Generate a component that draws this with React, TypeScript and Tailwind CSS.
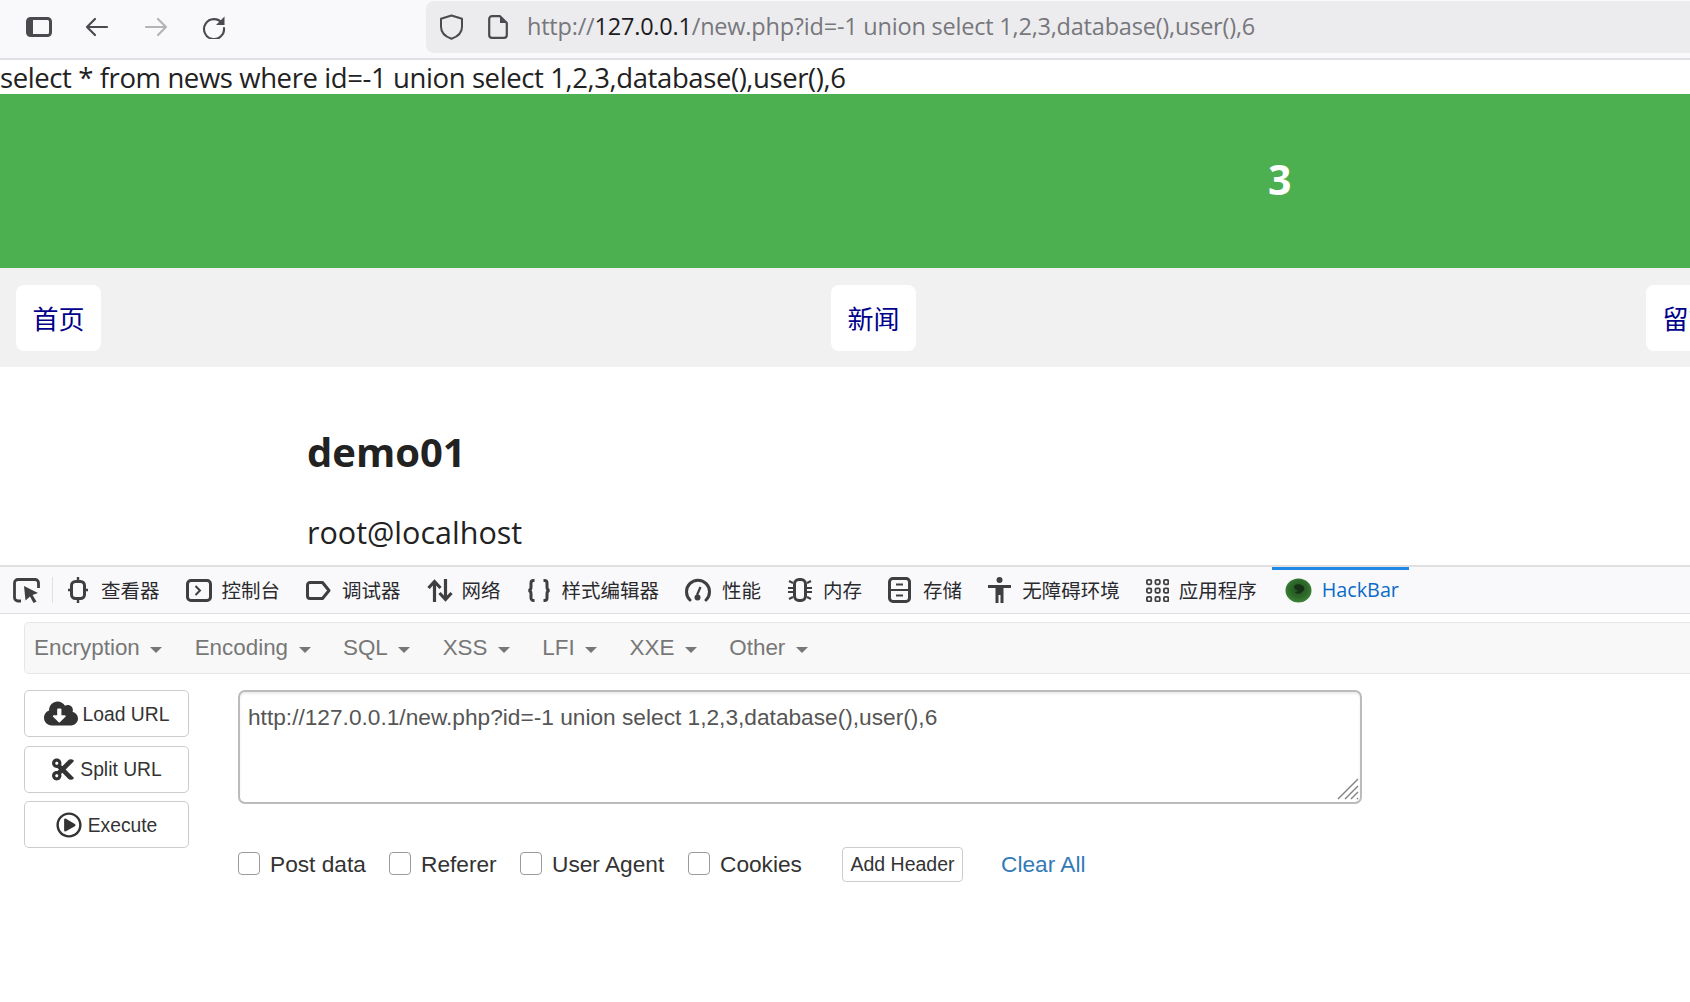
import { FaCloudDownloadAlt, FaCut, FaRegPlayCircle } from 'react-icons/fa';

const pageFont = "font-['Open_Sans','Noto_Sans_CJK_SC',sans-serif]";
const cjkFont = "font-['Noto_Sans_CJK_SC','Noto_Sans',sans-serif]";
const arial = "font-['Liberation_Sans',Arial,sans-serif]";

// ─── Browser toolbar icons ────────────────────────────────────────────────────

function SidebarIcon() {
  return (
    <svg width="26" height="20" viewBox="0 0 26 20" fill="none" className="shrink-0">
      <rect x="1.500" y="1.500" width="23" height="17" rx="3" stroke="#4a4a4f" strokeWidth="3" />
      <rect x="2" y="2" width="5" height="16" fill="#4a4a4f" />
    </svg>
  );
}

function ArrowIcon({ dir, color }: { dir: 'left' | 'right'; color: string }) {
  return (
    <svg width="24" height="20" viewBox="0 0 24 20" fill="none" stroke={color} strokeWidth="2.200" strokeLinecap="round" strokeLinejoin="round" className="shrink-0">
      {dir === 'left' ? <path d="M22 10H2M10 2l-8 8 8 8" /> : <path d="M2 10h20M14 2l8 8-8 8" />}
    </svg>
  );
}

function ReloadIcon() {
  return (
    <svg width="24" height="24" viewBox="0 0 24 24" fill="none" className="shrink-0">
      <path d="M20 8a10 10 0 1 0 2 5" stroke="#4a4a4f" strokeWidth="2.100" strokeLinecap="round" />
      <path d="M22.500 1.500v8.500H14z" fill="#4a4a4f" />
    </svg>
  );
}

function ShieldIcon() {
  return (
    <svg width="25" height="26" viewBox="0 0 25 26" fill="none" className="shrink-0">
      <path d="M12.500 1.500l10.500 3.200v8c0 6-4.500 10-10.500 12C6.500 22.700 2 18.700 2 12.700v-8z" stroke="#4a4a4f" strokeWidth="2" strokeLinejoin="round" />
    </svg>
  );
}

function DocIcon() {
  return (
    <svg width="20" height="24" viewBox="0 0 20 24" fill="none" className="shrink-0">
      <path d="M4 1.200h8l6.800 6.800v12a2.800 2.800 0 0 1-2.800 2.800H4A2.800 2.800 0 0 1 1.200 20V4A2.800 2.800 0 0 1 4 1.200z" stroke="#4a4a4f" strokeWidth="2.200" strokeLinejoin="round" />
      <path d="M12 1.500v6.500h6.500z" fill="#4a4a4f" />
    </svg>
  );
}

// ─── Devtools tab icons ───────────────────────────────────────────────────────

const ink = '#3f3f42';

function PickerIcon() {
  return (
    <svg width="27" height="25" viewBox="0 0 27 25" fill="none" className="shrink-0">
      <path d="M8 23H5a3.500 3.500 0 0 1-3.500-3.500V5A3.500 3.500 0 0 1 5 1.500h17A3.500 3.500 0 0 1 25.500 5v5" stroke={ink} strokeWidth="2.800" />
      <path d="M11 8l14 7-5.500 2 4 6.500-3 1.500-3.500-6.500-4.500 4z" fill={ink} />
    </svg>
  );
}

function InspectorIcon() {
  return (
    <svg width="20" height="26" viewBox="0 0 20 26" fill="none" className="shrink-0">
      <rect x="3.500" y="4.500" width="13" height="17" rx="4" stroke={ink} strokeWidth="3" />
      <path d="M10 0v4M10 22v4M0 13h3M17 13h3" stroke={ink} strokeWidth="2.400" />
    </svg>
  );
}

function ConsoleIcon() {
  return (
    <svg width="26" height="23" viewBox="0 0 26 23" fill="none" className="shrink-0">
      <rect x="1.500" y="1.500" width="23" height="20" rx="3.500" stroke={ink} strokeWidth="3" />
      <path d="M9.500 7l4.500 4.500L9.500 16" stroke={ink} strokeWidth="2" />
    </svg>
  );
}

function DebuggerIcon() {
  return (
    <svg width="25" height="19" viewBox="0 0 25 19" fill="none" className="shrink-0">
      <path d="M4 1.500h12.500l6.500 8-6.500 8H4A2.500 2.500 0 0 1 1.500 15V4A2.500 2.500 0 0 1 4 1.500z" stroke={ink} strokeWidth="3" strokeLinejoin="round" />
    </svg>
  );
}

function NetworkIcon() {
  return (
    <svg width="26" height="23" viewBox="0 0 26 23" fill="none" stroke={ink} strokeWidth="3.200" className="shrink-0">
      <path d="M7.500 23V3M1.500 9l6-6.500 6 6.500M18.500 0v20M12.500 14l6 6.500 6-6.500" />
    </svg>
  );
}

function BracesIcon() {
  return (
    <svg width="24" height="23" viewBox="0 0 24 23" fill="none" stroke={ink} strokeWidth="3" className="shrink-0">
      <path d="M7.500 1.500H6.500A2.500 2.500 0 0 0 4 4v4.300c0 2-1 3.200-2.700 3.200C3 11.500 4 12.700 4 14.700V19a2.500 2.500 0 0 0 2.500 2.500h1" />
      <path d="M16.500 1.500h1A2.500 2.500 0 0 1 20 4v4.300c0 2 1 3.200 2.700 3.200-1.700 0-2.700 1.200-2.700 3.200V19a2.500 2.500 0 0 1-2.500 2.500h-1" />
    </svg>
  );
}

function PerformanceIcon() {
  return (
    <svg width="26" height="24" viewBox="0 0 26 24" fill="none" className="shrink-0">
      <path d="M5 22A11.500 11.500 0 1 1 21 22" stroke={ink} strokeWidth="3" strokeLinecap="round" />
      <path d="M15.500 9L12 17" stroke={ink} strokeWidth="2.200" />
      <circle cx="12.500" cy="19.500" r="3" fill={ink} />
    </svg>
  );
}

function MemoryIcon() {
  return (
    <svg width="26" height="24" viewBox="0 0 26 24" fill="none" className="shrink-0">
      <rect x="7.500" y="1.500" width="11" height="21" rx="4.500" stroke={ink} strokeWidth="3" />
      <path d="M6 5L2 3M6 10H1M6 14H1M6 19l-4 2M20 5l4-2M20 10h5M20 14h5M20 19l4 2" stroke={ink} strokeWidth="2" />
    </svg>
  );
}

function StorageIcon() {
  return (
    <svg width="23" height="26" viewBox="0 0 23 26" fill="none" className="shrink-0">
      <rect x="1.500" y="1.500" width="20" height="23" rx="3.500" stroke={ink} strokeWidth="3" />
      <path d="M2 13h19M8 7.500h7M8 18.500h7" stroke={ink} strokeWidth="2.200" />
    </svg>
  );
}

function AccessIcon() {
  return (
    <svg width="23" height="26" viewBox="0 0 23 26" fill="none" className="shrink-0">
      <circle cx="11.500" cy="3" r="3" fill={ink} />
      <path d="M0 8h23v3h-7.500v15h-3v-8h-2v8h-3V11H0z" fill={ink} />
    </svg>
  );
}

function AppsIcon() {
  const cells = [0, 8.500, 17];
  return (
    <svg width="23" height="23" viewBox="0 0 23 23" fill="none" className="shrink-0">
      {cells.map((y) =>
        cells.map((x) => (
          <rect key={`${x}-${y}`} x={x + 0.900} y={y + 0.900} width="4.400" height="4.400" rx="1.200" stroke={ink} strokeWidth="1.800" />
        )),
      )}
    </svg>
  );
}

function HackBarIcon() {
  return (
    <svg width="27" height="25" viewBox="0 0 27 25" className="shrink-0">
      <defs>
        <radialGradient id="hb" cx="0.500" cy="0.450" r="0.600">
          <stop offset="0" stopColor="#1f4d1f" />
          <stop offset="0.600" stopColor="#2f6b2a" />
          <stop offset="1" stopColor="#3f8a3c" />
        </radialGradient>
      </defs>
      <ellipse cx="13.500" cy="12.500" rx="13" ry="12" fill="url(#hb)" />
      <path d="M9 8c3-3 8-2 10 1 1 3-1 4-3 6-2 1-5 1-6-1 2 0 3-1 3-2-2 0-4-1-4-4z" fill="#163216" />
    </svg>
  );
}

// ─── Devtools data ────────────────────────────────────────────────────────────

const tabs = [
  { label: '查看器', icon: <InspectorIcon />, gap: 'gap-[13px]' },
  { label: '控制台', icon: <ConsoleIcon />, gap: 'gap-[10px]' },
  { label: '调试器', icon: <DebuggerIcon />, gap: 'gap-[11px]' },
  { label: '网络', icon: <NetworkIcon />, gap: 'gap-[9px]' },
  { label: '样式编辑器', icon: <BracesIcon />, gap: 'gap-[11px]' },
  { label: '性能', icon: <PerformanceIcon />, gap: 'gap-[11px]' },
  { label: '内存', icon: <MemoryIcon />, gap: 'gap-[10px]' },
  { label: '存储', icon: <StorageIcon />, gap: 'gap-[12px]' },
  { label: '无障碍环境', icon: <AccessIcon />, gap: 'gap-[11px]' },
  { label: '应用程序', icon: <AppsIcon />, gap: 'gap-[10px]' },
];

const menus = ['Encryption', 'Encoding', 'SQL', 'XSS', 'LFI', 'XXE', 'Other'];

const checks = [
  { label: 'Post data', cls: 'w-[151px]' },
  { label: 'Referer', cls: 'w-[131px]' },
  { label: 'User Agent', cls: 'w-[168px]' },
  { label: 'Cookies', cls: 'w-[154px]' },
];

function SideButton({ icon, label, gap }: { icon: React.ReactNode; label: string; gap: string }) {
  return (
    <button className={`flex h-[47px] w-[165px] items-center justify-center rounded-[5px] border border-[#ccc] bg-white text-[19.300px] text-[#333] ${gap}`}>
      {icon}
      <span className="pt-[3px]">{label}</span>
    </button>
  );
}

export default function App() {
  return (
    <div className={`h-[1002px] w-[1690px] overflow-hidden bg-white ${pageFont}`}>
      {/* Browser toolbar */}
      <div className="flex h-[60px] items-start border-b-2 border-[#e0e0e2] bg-[#f9f9fb] pl-[26px]">
        <div className="flex h-[54px] items-center">
          <SidebarIcon />
          <div className="ml-[33px]"><ArrowIcon dir="left" color="#4a4a4f" /></div>
          <div className="ml-[35px]"><ArrowIcon dir="right" color="#b4b4b8" /></div>
          <div className="ml-[34px]"><ReloadIcon /></div>
        </div>
        <div className="mt-[1px] ml-[200px] flex h-[52px] flex-1 items-center rounded-l-lg bg-[#ececee] pl-[13px]">
          <ShieldIcon />
          <div className="ml-[24px]"><DocIcon /></div>
          <span className="ml-[19px] text-[23.500px] tracking-[-0.210px] whitespace-nowrap text-[#77777c]">
            http://<span className="text-[#1c1b22]">127.0.0.1</span>/new.php?id=-1 union select 1,2,3,database(),user(),6
          </span>
        </div>
      </div>

      {/* Page */}
      <p className="h-[34px] text-[27.500px] leading-[36px] tracking-[-0.400px] whitespace-nowrap text-[#222]">
        select * from news where id=-1 union select 1,2,3,database(),user(),6
      </p>
      <div className="flex h-[174px] items-center bg-[#4caf50] pb-[3px] pl-[1268px]">
        <span className="text-[41px] font-bold text-white">3</span>
      </div>
      <nav className="flex h-[99px] items-center gap-[730px] overflow-hidden bg-[#f1f1f1] pl-[16px]">
        {['首页', '新闻', '留言'].map((t) => (
          <a key={t} className={`flex h-[66px] w-[85px] shrink-0 items-center justify-center rounded-lg bg-white text-[26px] text-[#00008b] ${cjkFont}`}>
            {t}
          </a>
        ))}
      </nav>
      <div className="h-[198px] pl-[307px] text-[#222]">
        <h1 className="pt-[53px] text-[40px] leading-[64px] font-bold">demo01</h1>
        <p className="pt-[26px] text-[30.500px] leading-[44px]">root@localhost</p>
      </div>

      {/* Devtools tab strip */}
      <div className="flex h-[49px] items-center border-t-2 border-b border-t-[#e0e0e2] border-b-[#e0e0e2] bg-[#f9f9fb] pl-[13px]">
        <PickerIcon />
        <div className="mr-[15px] ml-[12px] h-[26px] w-px bg-[#e0e0e2]" />
        <div className={`flex items-center gap-[26px] text-[19.500px] text-[#2a2a2e] ${cjkFont}`}>
          {tabs.map((t) => (
            <div key={t.label} className={`flex items-center whitespace-nowrap ${t.gap}`}>
              {t.icon}
              {t.label}
            </div>
          ))}
        </div>
        <div className="relative ml-[15px] flex h-full w-[137px] items-center gap-[10px] pl-[13px] whitespace-nowrap text-[#0b6bc9]">
          <div className="absolute -top-[0.5px] left-0 h-[3px] w-full bg-[#1e88e5]" />
          <HackBarIcon />
          <span className="text-[19.800px]">HackBar</span>
        </div>
      </div>

      {/* HackBar panel */}
      <div className={`pt-[8px] pl-[24px] ${arial}`}>
        <div className="flex h-[52px] items-center gap-[32.400px] rounded-l-[5px] border border-r-0 border-[#e7e7e7] bg-[#f8f8f8] pl-[9px] text-[22.400px] text-[#777]">
          {menus.map((m) => (
            <span key={m} className="flex items-center gap-[10.500px]">
              {m}
              <span className="mt-[4px] h-0 w-0 border-x-[6px] border-t-[6px] border-x-transparent border-t-[#777]" />
            </span>
          ))}
        </div>

        <div className="mt-[16px] flex items-start">
          <div className="flex w-[165px] flex-col gap-[8.500px]">
            <SideButton icon={<FaCloudDownloadAlt className="h-[31px] w-[34px]" />} label="Load URL" gap="gap-[5px]" />
            <SideButton icon={<FaCut className="h-[25px] w-[24px]" />} label="Split URL" gap="gap-[5px]" />
            <SideButton icon={<FaRegPlayCircle className="h-[26px] w-[26px]" />} label="Execute" gap="gap-[6px]" />
          </div>

          <div className="ml-[49px]">
            <div className="relative h-[114px] w-[1124px] rounded-[7px] border-2 border-[#bbb] px-[8px] pt-[10px] text-[22.700px] leading-[30px] text-[#555] shadow-[inset_0_2px_2px_rgba(0,0,0,0.075)]">
              http://127.0.0.1/new.php?id=-1 union select 1,2,3,database(),user(),6
              <svg width="22" height="22" viewBox="0 0 22 22" fill="none" stroke="#808080" strokeWidth="1.400" className="absolute right-[1px] bottom-[2px]">
                <path d="M1 21L21 1M8 21L21 8M14 21l7-7M20 21l1-1" />
              </svg>
            </div>

            <div className="mt-[42px] flex h-[36px] items-center text-[22.700px] text-[#333]">
              {checks.map((c) => (
                <label key={c.label} className={`flex items-center gap-[10px] ${c.cls}`}>
                  <span className="h-[23px] w-[22px] shrink-0 rounded-[4px] border border-[#9a9a9f] bg-white" />
                  {c.label}
                </label>
              ))}
              <button className="h-[35px] w-[121px] rounded-[4px] border border-[#ccc] bg-white pt-[1px] text-[19.500px] text-[#333]">
                Add Header
              </button>
              <a className="ml-[38px] text-[#337ab7]">Clear All</a>
            </div>
          </div>
        </div>
      </div>
    </div>
  );
}
